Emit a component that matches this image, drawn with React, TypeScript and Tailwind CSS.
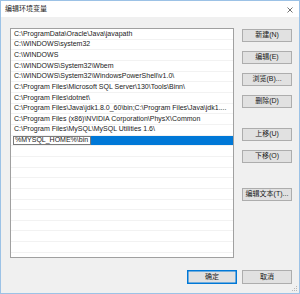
import React from 'react';

const paths = [
  'C:\\ProgramData\\Oracle\\Java\\javapath',
  'C:\\WINDOWS\\system32',
  'C:\\WINDOWS',
  'C:\\WINDOWS\\System32\\Wbem',
  'C:\\WINDOWS\\System32\\WindowsPowerShell\\v1.0\\',
  'C:\\Program Files\\Microsoft SQL Server\\130\\Tools\\Binn\\',
  'C:\\Program Files\\dotnet\\',
  'C:\\Program Files\\Java\\jdk1.8.0_60\\bin;C:\\Program Files\\Java\\jdk1....',
  'C:\\Program Files (x86)\\NVIDIA Corporation\\PhysX\\Common',
  'C:\\Program Files\\MySQL\\MySQL Utilities 1.6\\',
];

const font = { fontFamily: '"Liberation Sans", "Noto Sans CJK SC", sans-serif' };

function Btn({ label, primary, className = '' }: { label: string; primary?: boolean; className?: string }) {
  return (
    <button
      className={`w-[50px] h-[13px] flex items-center justify-center text-[7px] text-[#1a1a1a] bg-[#e1e1e1] border ${
        primary ? 'border-[#0078d7] shadow-[inset_0_0_0_0.5px_#0078d7]' : 'border-[#adadad]'
      } ${className}`}
    >
      {label}
    </button>
  );
}

export default function App() {
  const empty = Array.from({ length: 11 });
  return (
    <div style={font} className="w-[300px] h-[294px] flex flex-col border border-[#9cc2e6] bg-[#f0f0f0] relative select-none">
      <div className="h-[16px] bg-white flex items-center justify-between pl-[4px] pr-[6px]">
        <span className="text-[7px] text-[#1a1a1a]">编辑环境变量</span>
        <svg width="6" height="6" viewBox="0 0 6 6" className="mt-[1px]">
          <path d="M0.5 0.5L5.5 5.5M5.5 0.5L0.5 5.5" stroke="#333" strokeWidth="0.7" />
        </svg>
      </div>

      <div className="flex-1 flex flex-col pl-[9px] pr-[7px] pt-[11px]">
        <div className="flex gap-[8px]">
          <div className="w-[224px] h-[230px] bg-white border border-[#a0a0a0] overflow-hidden">
            {paths.map((p) => (
              <div
                key={p}
                className="h-[10.667px] flex items-center pl-[3px] text-[7px] text-[#1a1a1a] whitespace-nowrap border-b border-[#f2f2f2]"
              >
                {p}
              </div>
            ))}
            <div className="h-[10.667px] flex items-stretch pl-[2px] border-b border-[#f2f2f2]">
              <div className="w-[78px] bg-white border border-[#7a7a7a] flex items-center pl-[1px] text-[7px] text-[#1a1a1a] whitespace-nowrap">
                %MYSQL_HOME%\bin
              </div>
              <div className="flex-1 bg-[#0078d7]" />
            </div>
            {empty.map((_, i) => (
              <div key={i} className="h-[10.667px] border-b border-[#f2f2f2]" />
            ))}
          </div>

          <div className="flex flex-col pt-[1px]">
            <Btn label="新建(N)" />
            <Btn label="编辑(E)" className="mt-[9px]" />
            <Btn label="浏览(B)..." className="mt-[9px]" />
            <Btn label="删除(D)" className="mt-[9px]" />
            <Btn label="上移(U)" className="mt-[20px]" />
            <Btn label="下移(O)" className="mt-[9px]" />
            <Btn label="编辑文本(T)..." className="mt-[25px]" />
          </div>
        </div>

        <div className="flex justify-end gap-[5px] mt-[12px]">
          <Btn label="确定" primary className="h-[14px]" />
          <Btn label="取消" className="h-[14px]" />
        </div>
      </div>

      <svg width="6" height="6" viewBox="0 0 6 6" className="absolute right-[1px] bottom-[1px]">
        <rect x="4" y="0" width="1" height="1" fill="#b8b8b8" />
        <rect x="2" y="2" width="1" height="1" fill="#b8b8b8" />
        <rect x="4" y="2" width="1" height="1" fill="#b8b8b8" />
        <rect x="0" y="4" width="1" height="1" fill="#b8b8b8" />
        <rect x="2" y="4" width="1" height="1" fill="#b8b8b8" />
        <rect x="4" y="4" width="1" height="1" fill="#b8b8b8" />
      </svg>
    </div>
  );
}
